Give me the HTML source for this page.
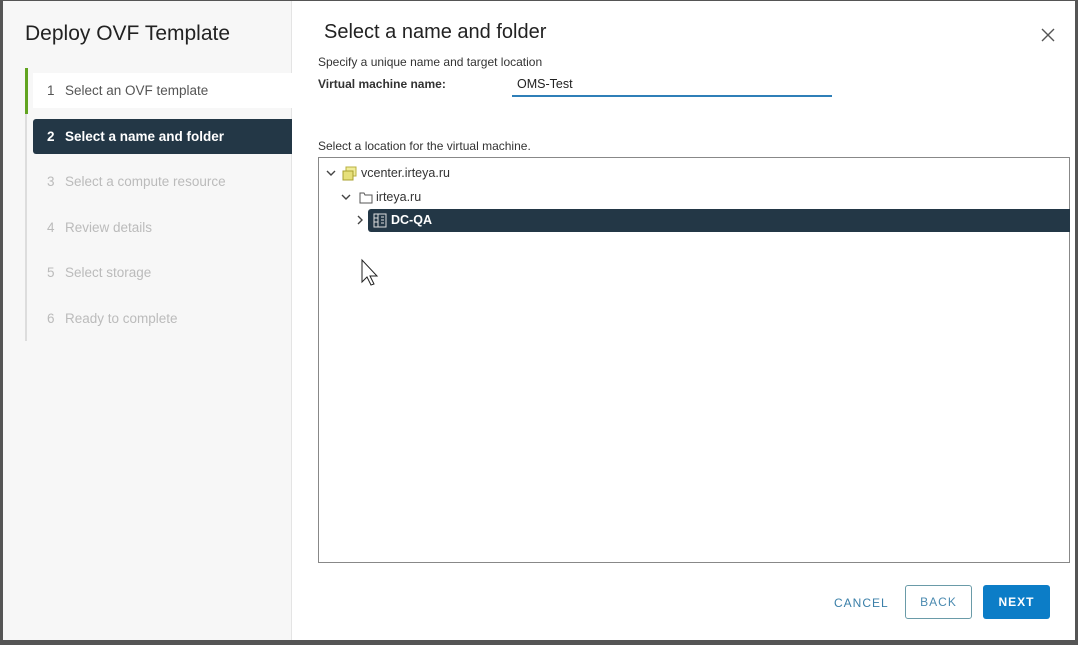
<!DOCTYPE html>
<html><head><meta charset="utf-8"><style>
*{margin:0;padding:0;box-sizing:border-box}
body{width:1078px;height:645px;background:#555;font-family:"Liberation Sans",sans-serif;position:relative;overflow:hidden}
.dlg{position:absolute;left:3px;top:1px;width:1072px;height:639px;background:#fff}
.left{position:absolute;left:0;top:0;width:289px;height:639px;background:#f7f7f7;border-right:1px solid #e4e4e4}
.t{position:absolute;left:22px;top:21px;font-size:21px;color:#222}
.vl{position:absolute;left:22px;top:67px;width:2px;height:273px;background:#ddd}
.gl{position:absolute;left:22px;top:67px;width:3px;height:46px;background:#62a420}
.step{position:absolute;left:30px;width:259px;height:35px;font-size:13.5px;line-height:35px;padding-left:14px;color:#bbb}
.step b{display:inline-block;width:18px;font-weight:inherit}
.s1{top:72px;color:#555;background:#fff}
.s2{top:118px;background:#233746;color:#fff;font-weight:bold;border-radius:3px 0 0 3px}
.abs{position:absolute}
</style></head><body>
<div class="dlg">
<div class="left">
<div class="t">Deploy OVF Template</div>
<div class="vl"></div><div class="gl"></div>
<div class="step s1"><b>1</b>Select an OVF template</div>
<div class="step s2"><b>2</b>Select a name and folder</div>
<div class="step" style="top:163px"><b>3</b>Select a compute resource</div>
<div class="step" style="top:209px"><b>4</b>Review details</div>
<div class="step" style="top:254px"><b>5</b>Select storage</div>
<div class="step" style="top:300px"><b>6</b>Ready to complete</div>
</div>
<div class="abs" style="left:321px;top:20px;font-size:20px;color:#222">Select a name and folder</div>
<svg class="abs" style="left:1038px;top:27px" width="14" height="14"><path d="M1 1L13 13M13 1L1 13" stroke="#555" stroke-width="1.4"/></svg>
<div class="abs" style="left:315px;top:54px;font-size:12px;color:#333">Specify a unique name and target location</div>
<div class="abs" style="left:315px;top:76px;font-size:12px;color:#333;font-weight:bold">Virtual machine name:</div>
<div class="abs" style="left:509px;top:74px;width:320px;height:22px;border-bottom:2px solid #2f7fb8;font-size:12.5px;color:#222;padding:2px 5px">OMS-Test</div>
<div class="abs" style="left:315px;top:138px;font-size:12px;color:#333">Select a location for the virtual machine.</div>
<div class="abs" style="left:315px;top:156px;width:752px;height:406px;border:1px solid #888"></div>
<svg class="abs" style="left:323px;top:169px" width="10" height="7"><path d="M1 1L5 5L9 1" fill="none" stroke="#444" stroke-width="1.4"/></svg>
<svg class="abs" style="left:339px;top:165px" width="16" height="15"><rect x="4" y="1" width="10" height="9" fill="#f0ec9a" stroke="#b8b040"/><rect x="1" y="5" width="10" height="9" fill="#e6e07a" stroke="#a8a030"/></svg>
<div class="abs" style="left:358px;top:165px;font-size:12.5px;color:#333">vcenter.irteya.ru</div>
<svg class="abs" style="left:338px;top:193px" width="10" height="7"><path d="M1 1L5 5L9 1" fill="none" stroke="#444" stroke-width="1.4"/></svg>
<svg class="abs" style="left:356px;top:190px" width="14" height="13"><path d="M1 2H5L6 4H13V12H1Z" fill="none" stroke="#555"/></svg>
<div class="abs" style="left:373px;top:189px;font-size:12.5px;color:#333">irteya.ru</div>
<svg class="abs" style="left:354px;top:214px" width="7" height="10"><path d="M1 1L5 5L1 9" fill="none" stroke="#444" stroke-width="1.4"/></svg>
<div class="abs" style="left:365px;top:208px;width:702px;height:23px;background:#233746;border-radius:3px 0 0 3px"></div>
<svg class="abs" style="left:370px;top:212px" width="14" height="15"><rect x="1" y="1" width="12" height="13" fill="none" stroke="#ddd"/><path d="M5 1V14M1 5H5M1 9H5M8 4H11M8 7H11M8 10H11" stroke="#ddd"/></svg>
<div class="abs" style="left:388px;top:212px;font-size:12.5px;color:#fff;font-weight:bold">DC-QA</div>
<svg class="abs" style="left:357px;top:257px" width="20" height="28"><path d="M2 2 L2 24 L7 19 L11 27 L14 26 L10 18 L17 18 Z" fill="#fff" stroke="#222"/></svg>
<div class="abs" style="left:831px;top:595px;font-size:12px;color:#3a7fa8;letter-spacing:1px">CANCEL</div>
<div class="abs" style="left:902px;top:584px;width:67px;height:34px;border:1px solid #6a9ba8;border-radius:3px;font-size:12px;color:#4a8ab0;letter-spacing:1px;text-align:center;line-height:32px">BACK</div>
<div class="abs" style="left:980px;top:584px;width:67px;height:34px;background:#0c7dc7;border-radius:3px;font-size:12px;color:#fff;font-weight:bold;letter-spacing:1px;text-align:center;line-height:34px">NEXT</div>
</div>
</body></html>
